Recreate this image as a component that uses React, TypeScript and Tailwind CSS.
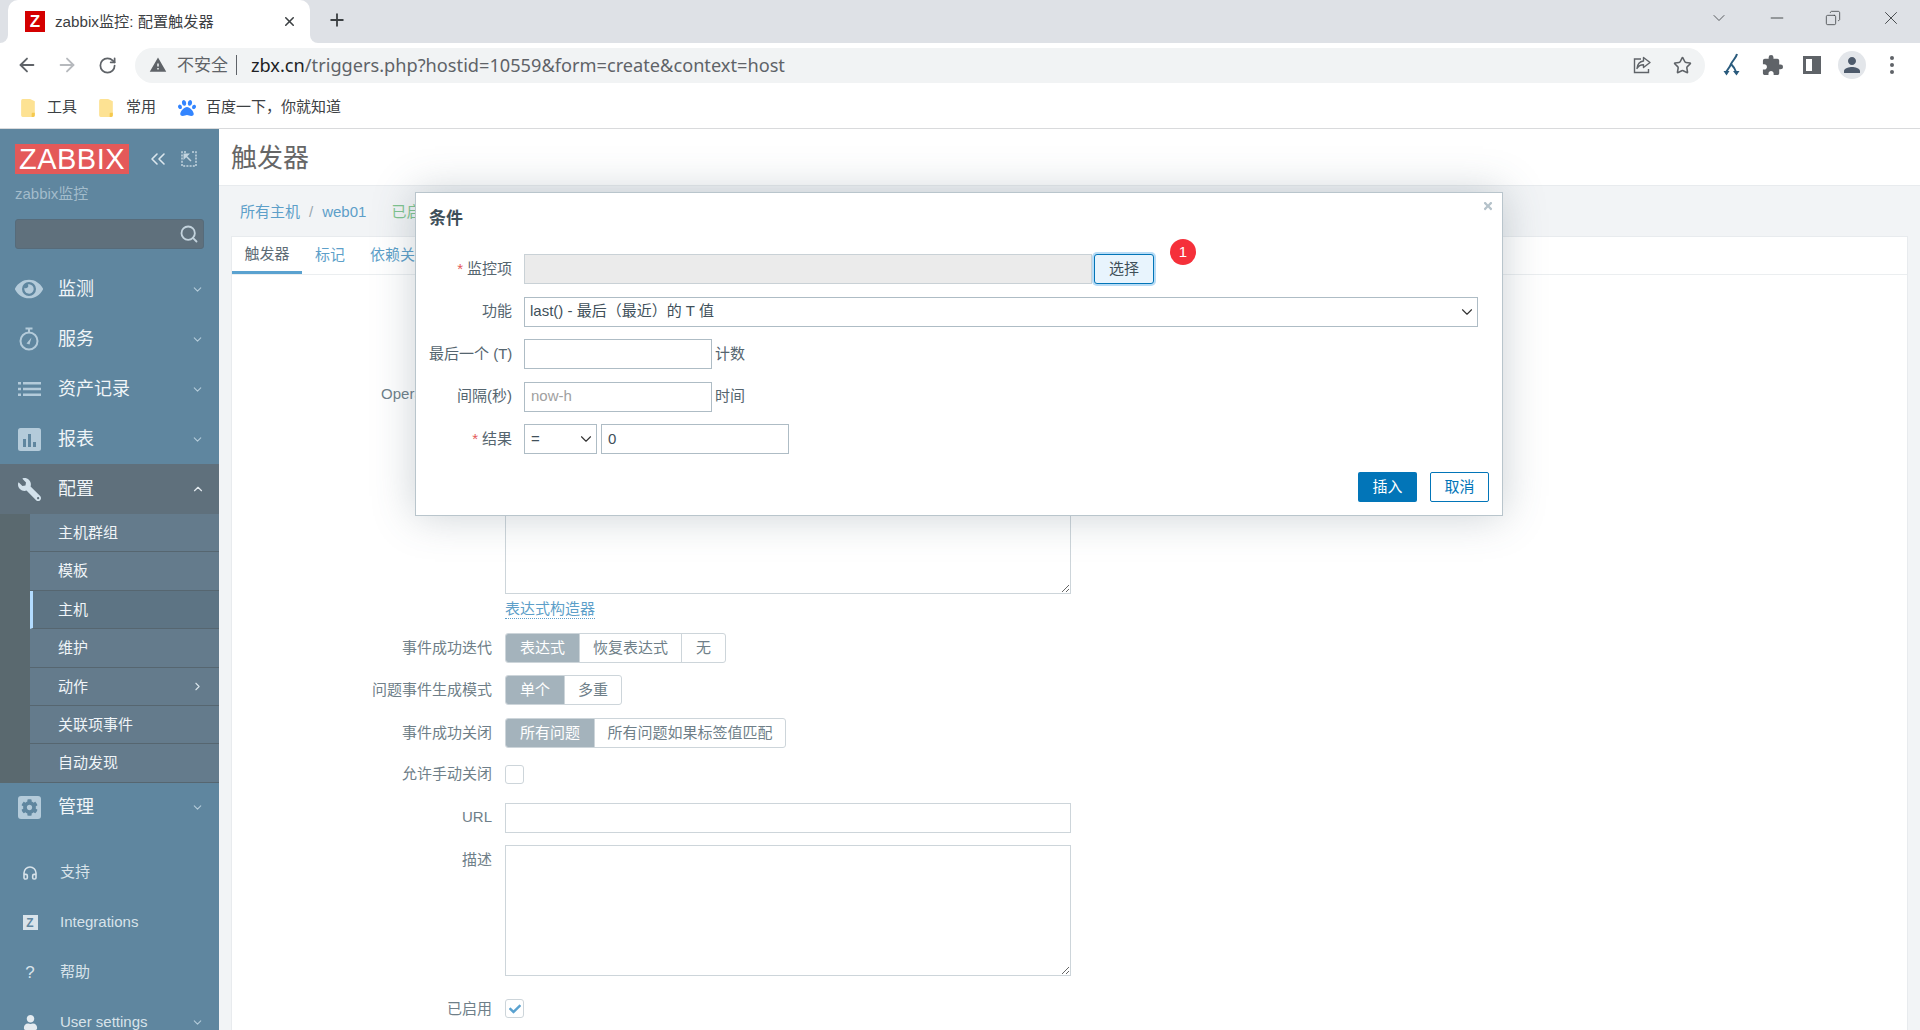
import {
  ArrowLeft,
  ArrowRight,
  ChevronDown,
  ChevronRight,
  ChevronUp,
  ChevronsLeft,
  Copy,
  Headphones,
  Minus,
  Plus,
  RotateCw,
  Search,
  Star,
  X,
} from "lucide-react";
import type { ReactNode } from "react";
import { FaCheck, FaCog, FaEye, FaPaw, FaTimes, FaUser, FaWrench } from "react-icons/fa";
import { MdExtension, MdPerson, MdWarning } from "react-icons/md";

const subItems = ["主机群组", "模板", "主机", "维护", "动作", "关联项事件", "自动发现"];

function FolderIcon() {
  return (
    <svg width="17" height="20" viewBox="0 0 16 19" aria-hidden="true">
      <path d="M1 2.5A1.5 1.5 0 0 1 2.5 1h7L14 3v13.5a1.5 1.5 0 0 1-1.5 1.5h-10A1.5 1.5 0 0 1 1 16.5z" fill="#fde293" />
      <path d="M14 14v2.5a1.5 1.5 0 0 1-1.5 1.5H11v-3a1 1 0 0 1 1-1z" fill="#f5c94f" />
    </svg>
  );
}

function ShareIcon() {
  return (
    <svg width="20" height="20" viewBox="0 0 20 20" fill="none" stroke="#5f6368" strokeWidth="1.4" aria-hidden="true">
      <path d="M9 4H2.5v13.5h14V14" />
      <path d="M11.5 2.5 18 7.5l-6.5 5V9.7c-3 0-5 1-6.5 3.8.4-4 2.5-7 6.5-7.5z" strokeLinejoin="round" />
    </svg>
  );
}

function ForkIcon() {
  return (
    <svg width="18" height="24" viewBox="0 0 18 24" fill="none" stroke="#2a5b7d" strokeWidth="2" aria-hidden="true">
      <path d="M14 1c-1 4-4 6-6 10-1 3-3 5-5 8" />
      <path d="M8 11c2 2 4 4 5 8" />
      <path d="M0.5 18h6l-3 4.5zM10 18h6.5l-3 4.5z" fill="#2a5b7d" stroke="none" />
    </svg>
  );
}

function StopwatchIcon() {
  return (
    <svg width="20" height="24" viewBox="0 0 20 24" fill="none" stroke="#b4cbda" strokeWidth="2" aria-hidden="true">
      <circle cx="10" cy="14" r="8.5" />
      <path d="M6.5 1.5h7M10 2v3" />
      <path d="M7.5 16.5 12.5 10.5l-2 7z" fill="#b4cbda" stroke="none" />
    </svg>
  );
}

function ListIcon() {
  return (
    <svg width="23" height="14" viewBox="0 0 23 14" fill="#b4cbda" aria-hidden="true">
      <path d="M0 0h3v2.5H0zM5 0h18v2.5H5zM0 5.7h3v2.5H0zM5 5.7h18v2.5H5zM0 11.5h3V14H0zM5 11.5h18V14H5z" />
    </svg>
  );
}

function ChartIcon() {
  return (
    <svg width="23" height="23" viewBox="0 0 23 23" aria-hidden="true">
      <rect width="23" height="23" rx="2.5" fill="#b4cbda" />
      <path d="M5 11h3v8H5zM10 6h3v13h-3zM15 14h3v5h-3z" fill="#5f869f" />
    </svg>
  );
}

function GearBoxIcon() {
  return (
    <span className="flex h-[23px] w-[23px] items-center justify-center rounded-[3px] bg-[#b4cbda]">
      <FaCog size={17} color="#5f869f" />
    </span>
  );
}

function ExpandIcon() {
  return (
    <svg width="16" height="16" viewBox="0 0 16 16" fill="none" stroke="#c4d5e0" strokeWidth="1.5" aria-hidden="true">
      <path d="M5 1H1v14h14V1h-4" strokeDasharray="2 1.2" />
      <path d="M2.5 2.5 9 2.5 2.5 9z" fill="#c4d5e0" stroke="none" />
      <path d="M4 4l6 6" />
    </svg>
  );
}

function TabStrip() {
  return (
    <div className="flex h-[43px] items-end bg-[#dee1e6] pl-2">
      <div className="relative flex h-[43px] w-[302px] items-center rounded-t-[10px] bg-white pl-[17px] pr-[13px]">
        <span className="absolute bottom-0 left-[-8px] h-2 w-2 bg-white">
          <span className="block h-2 w-2 rounded-br-[8px] bg-[#dee1e6]" />
        </span>
        <span className="absolute bottom-0 right-[-8px] h-2 w-2 bg-white">
          <span className="block h-2 w-2 rounded-bl-[8px] bg-[#dee1e6]" />
        </span>
        <span className="flex h-[21px] w-[20px] items-center justify-center bg-[#d40000] text-[17px] font-bold leading-none text-white">
          Z
        </span>
        <span className="ml-[10px] flex-1 pt-[1px] text-[15.2px] text-[#3c4043]">zabbix监控: 配置触发器</span>
        <X size={15} strokeWidth={2.5} color="#3c4043" />
      </div>
      <div className="mb-[13px] ml-[17px]">
        <Plus size={20} strokeWidth={2.2} color="#3c4043" />
      </div>
      <div className="ml-auto flex h-full items-center pb-[7px] text-[#3c4043]">
        <ChevronDown size={20} strokeWidth={1} className="mr-[38px]" />
        <Minus size={20} strokeWidth={1.1} className="mr-[38px]" />
        <Copy size={16} strokeWidth={1.2} className="mr-[39px] -scale-x-100" />
        <X size={22} strokeWidth={1} className="mr-[18px]" />
      </div>
    </div>
  );
}

function Toolbar() {
  return (
    <div className="flex h-[44px] items-center bg-white pl-[16px]">
      <ArrowLeft size={22} strokeWidth={2} color="#5f6368" />
      <ArrowRight size={22} strokeWidth={2} color="#b6b9bd" className="ml-[18px]" />
      <RotateCw size={19} strokeWidth={2.2} color="#5f6368" className="ml-[20px]" />
      <div className="ml-[18px] flex h-[35px] w-[1570px] items-center rounded-full bg-[#f1f3f4] pl-[14px] pr-[13px]">
        <MdWarning size={18} color="#5f6368" />
        <span className="ml-[10px] pt-[1px] text-[17px] text-[#5f6368]">不安全</span>
        <span className="ml-2 h-[20px] w-px bg-[#5f6368]" />
        <span className="ml-[14px] pt-[1px] text-[18.2px] text-[#202124] [font-family:'Noto_Sans',sans-serif]">
          zbx.cn<span className="text-[#5f6368]">/triggers.php?hostid=10559&amp;form=create&amp;context=host</span>
        </span>
        <span className="ml-auto">
          <ShareIcon />
        </span>
        <Star size={19} strokeWidth={2} color="#5f6368" className="ml-[21px]" />
      </div>
      <div className="ml-[18px]">
        <ForkIcon />
      </div>
      <MdExtension size={23} color="#5f6368" className="ml-[20px]" />
      <span className="ml-[19px] h-[18px] w-[18px] border-[3px] border-r-[9px] border-[#5f6368] bg-white" />
      <span className="ml-[17px] flex h-7 w-7 items-center justify-center rounded-full bg-[#e3e6ea]">
        <MdPerson size={24} color="#4d5a6b" />
      </span>
      <span className="ml-[24px] flex flex-col gap-[3px]">
        <span className="h-[4px] w-[4px] rounded-full bg-[#5f6368]" />
        <span className="h-[4px] w-[4px] rounded-full bg-[#5f6368]" />
        <span className="h-[4px] w-[4px] rounded-full bg-[#5f6368]" />
      </span>
    </div>
  );
}

function Bookmarks() {
  return (
    <div className="flex h-[42px] items-center border-b border-[#d9dadc] bg-white pl-5 text-[15px] text-[#3c4043]">
      <FolderIcon />
      <span className="ml-[10px]">工具</span>
      <span className="ml-[21px]">
        <FolderIcon />
      </span>
      <span className="ml-[11px]">常用</span>
      <FaPaw size={18} color="#3385ff" className="ml-[22px]" />
      <span className="ml-[10px]">百度一下，你就知道</span>
    </div>
  );
}

function NavItem({ icon, label, open }: { icon: ReactNode; label: string; open?: boolean }) {
  return (
    <div className={`flex h-[50px] items-center text-[18px] text-[#f0f5f8] ${open ? "bg-[#5f707c]" : ""}`}>
      <span className="flex w-[58px] shrink-0 justify-center">{icon}</span>
      <span className="flex-1">{label}</span>
      {open ? (
        <ChevronUp size={14} color="#e4ebf0" className="mr-[14px]" />
      ) : (
        <ChevronDown size={13} color="#b4cbda" className="mr-[15px]" />
      )}
    </div>
  );
}

function FooterItem({ icon, label, more }: { icon: ReactNode; label: string; more?: boolean }) {
  return (
    <div className="flex h-[50px] items-center text-[15px] text-[#d8e3ea]">
      <span className="flex w-[60px] shrink-0 justify-center">{icon}</span>
      <span className="flex-1">{label}</span>
      {more ? <ChevronDown size={13} color="#b4cbda" className="mr-[15px]" /> : null}
    </div>
  );
}

function Sidebar() {
  return (
    <aside className="h-full w-[219px] shrink-0 overflow-hidden bg-[#5f869f]">
      <div className="flex items-center pl-[15px] pt-[15px]">
        <span className="flex h-[30px] w-[114px] items-center justify-center bg-[#e45959] text-[29px] leading-none tracking-[0.5px] text-white">
          ZABBIX
        </span>
        <ChevronsLeft size={24} strokeWidth={1.6} color="#dbe6ed" className="ml-[17px]" />
        <span className="ml-[11px]">
          <ExpandIcon />
        </span>
      </div>
      <div className="ml-[15px] mt-[10px] text-[15px] leading-[20px] text-[#a3bccb]">zabbix监控</div>
      <div className="ml-[15px] mt-[15px] flex h-[30px] w-[189px] items-center justify-end rounded-[3px] border border-[#566b7a] bg-[#5f707c] pr-[4px]">
        <Search size={20} strokeWidth={2.2} color="#c3d3dd" />
      </div>
      <nav className="mt-[15px]">
        <NavItem icon={<FaEye size={28} color="#b4cbda" />} label="监测" />
        <NavItem icon={<StopwatchIcon />} label="服务" />
        <NavItem icon={<ListIcon />} label="资产记录" />
        <NavItem icon={<ChartIcon />} label="报表" />
        <NavItem icon={<FaWrench size={23} color="#d3e2ec" className="-scale-x-100" />} label="配置" open />
        <div className="flex bg-[#5a696f] pl-[30px]">
          <div className="flex-1">
            {subItems.map((item) => (
              <div
                key={item}
                className={`flex h-[38.4px] items-center border-b border-[#566670] pt-[1px] text-[15px] text-[#f0f5f8] ${
                  item === "主机" ? "border-l-[3px] border-l-[#b3dcff] bg-[#5d7484] pl-[25px]" : "bg-[#647b8c] pl-[28px]"
                }`}
              >
                <span className="flex-1">{item}</span>
                {item === "动作" ? <ChevronRight size={13} color="#d8e3ea" className="mr-[15px]" /> : null}
              </div>
            ))}
          </div>
        </div>
        <NavItem icon={<GearBoxIcon />} label="管理" />
      </nav>
      <div className="mt-[15px]">
        <FooterItem icon={<Headphones size={16} strokeWidth={2.4} color="#d8e3ea" />} label="支持" />
        <FooterItem
          icon={
            <span className="flex h-[15px] w-[15px] items-center justify-center bg-[#d8e3ea] text-[12px] font-bold leading-none text-[#5f869f]">
              Z
            </span>
          }
          label="Integrations"
        />
        <FooterItem icon={<span className="text-[17px] text-[#d8e3ea]">?</span>} label="帮助" />
        <FooterItem icon={<FaUser size={15} color="#e4ebf0" />} label="User settings" more />
      </div>
    </aside>
  );
}

function FormRow({ label, className, children }: { label?: string; className?: string; children: ReactNode }) {
  return (
    <div className={`flex items-center ${className ?? ""}`}>
      <div className="w-[260px] shrink-0 text-right text-[15px] text-[#6f7f89]">{label}</div>
      <div className="ml-[13px]">{children}</div>
    </div>
  );
}

function Segments({ items }: { items: { label: string; width: number }[] }) {
  return (
    <div className="flex h-[30px] overflow-hidden rounded-[3px] border border-[#cdd5da] text-[15px]">
      {items.map((item, i) => (
        <span
          key={item.label}
          style={{ width: item.width }}
          className={`flex items-center justify-center ${
            i === 0 ? "bg-[#a4b3bc] text-white" : "border-l border-[#cdd5da] text-[#6f7f89] first:border-l-0"
          }`}
        >
          {item.label}
        </span>
      ))}
    </div>
  );
}

function TriggerForm() {
  return (
    <div className="mx-[12px] h-full flex-1 border border-b-0 border-[#e8ebee] bg-white">
      <div className="flex h-[38px] items-stretch border-b border-[#ebeef0] text-[15px] text-[#5d9fc9]">
        <span className="flex w-[70px] items-center justify-center border-b-[3px] border-[#5aa2d0] text-[#5d6c75]">
          触发器
        </span>
        <span className="ml-[13px] flex items-center">标记</span>
        <span className="ml-[25px] flex items-center">依赖关系</span>
      </div>
      <div className="pt-[104px]">
        <FormRow label="Operational data">
          <div className="h-[30px] w-[566px] border border-[#cdd5da]" />
        </FormRow>
        <FormRow className="mt-3 !items-start">
          <textarea readOnly className="block h-[173px] w-[566px] border border-[#cdd5da] bg-white" />
        </FormRow>
        <div className="ml-[273px] mt-[5px] w-max border-b border-dotted border-[#5d9fc9] text-[15px] leading-[19px] text-[#5d9fc9]">
          表达式构造器
        </div>
        <FormRow label="事件成功迭代" className="mt-[14px]">
          <Segments
            items={[
              { label: "表达式", width: 73 },
              { label: "恢复表达式", width: 102 },
              { label: "无", width: 44 },
            ]}
          />
        </FormRow>
        <FormRow label="问题事件生成模式" className="mt-[12px]">
          <Segments
            items={[
              { label: "单个", width: 58 },
              { label: "多重", width: 57 },
            ]}
          />
        </FormRow>
        <FormRow label="事件成功关闭" className="mt-[13px]">
          <Segments
            items={[
              { label: "所有问题", width: 88 },
              { label: "所有问题如果标签值匹配", width: 191 },
            ]}
          />
        </FormRow>
        <FormRow label="允许手动关闭" className="mt-[15px]">
          <span className="block h-[19px] w-[19px] rounded-[3px] border border-[#cdd5da]" />
        </FormRow>
        <FormRow label="URL" className="mt-[17px]">
          <div className="h-[30px] w-[566px] border border-[#cdd5da]" />
        </FormRow>
        <FormRow label="描述" className="mt-[12px] !items-start [&>div:first-child]:pt-[4px]">
          <textarea readOnly className="block h-[131px] w-[566px] border border-[#cdd5da] bg-white" />
        </FormRow>
        <FormRow label="已启用" className="mt-[22px]">
          <span className="flex h-[19px] w-[19px] items-center justify-center rounded-[3px] border border-[#cdd5da]">
            <FaCheck size={12} color="#5aa2d0" />
          </span>
        </FormRow>
      </div>
    </div>
  );
}

function ModalRow({ label, required, children }: { label: string; required?: boolean; children: ReactNode }) {
  return (
    <div className="flex h-[30px] items-center">
      <div className="w-[83px] shrink-0 whitespace-nowrap text-right text-[15px] text-[#55656f]">
        {required ? <span className="mr-1 text-[#e45959]">*</span> : null}
        {label}
      </div>
      <div className="ml-3 flex items-center">{children}</div>
    </div>
  );
}

function ConditionModal() {
  return (
    <div className="absolute left-[415px] top-[192px] h-[324px] w-[1088px] border border-[#b9c5cc] bg-white pl-[13px] pr-[13px] text-[15px] shadow-[0_0_40px_rgba(70,90,105,0.28)]">
      <FaTimes size={12} color="#b5c2ca" className="absolute right-[8px] top-[7px]" />
      <div className="pt-[13px] text-[17px] font-bold leading-[26px] text-[#3e4f59]">条件</div>
      <div className="mt-[22px] flex flex-col gap-[12.5px]">
        <ModalRow label="监控项" required>
          <div className="h-[30px] w-[568px] border border-[#c9d1d6] bg-[#ebebeb]" />
          <button
            type="button"
            className="ml-[2px] h-[30px] w-[60px] rounded-[3px] border border-[#0275b8] bg-[#e8f4fd] text-[15px] text-[#3f4f58] shadow-[0_0_0_2px_#b8dcf6]"
          >
            选择
          </button>
        </ModalRow>
        <ModalRow label="功能">
          <div className="flex h-[30px] w-[954px] items-center border border-[#aebcc5] pl-[5px] pr-[1px] text-[#40505a]">
            <span className="flex-1">last() - 最后（最近）的 T 值</span>
            <ChevronDown size={18} strokeWidth={1.5} color="#333" />
          </div>
        </ModalRow>
        <ModalRow label="最后一个 (T)">
          <div className="h-[30px] w-[188px] border border-[#aebcc5]" />
          <span className="ml-[3px] text-[#55656f]">计数</span>
        </ModalRow>
        <ModalRow label="间隔(秒)">
          <div className="flex h-[30px] w-[188px] items-center border border-[#aebcc5] pl-[6px] text-[#a0a0a0]">now-h</div>
          <span className="ml-[3px] text-[#55656f]">时间</span>
        </ModalRow>
        <ModalRow label="结果" required>
          <div className="flex h-[30px] w-[73px] items-center border border-[#aebcc5] pl-[6px] pr-[1px] text-[#40505a]">
            <span className="flex-1">=</span>
            <ChevronDown size={18} strokeWidth={1.5} color="#333" />
          </div>
          <div className="ml-1 flex h-[30px] w-[188px] items-center border border-[#aebcc5] pl-[6px] text-[#40505a]">0</div>
        </ModalRow>
      </div>
      <div className="mt-[18px] flex justify-end gap-[13px]">
        <button type="button" className="h-[30px] w-[59px] rounded-[2px] bg-[#0275b8] text-[15px] text-white">
          插入
        </button>
        <button type="button" className="h-[30px] w-[59px] rounded-[2px] border border-[#0275b8] text-[15px] text-[#0275b8]">
          取消
        </button>
      </div>
    </div>
  );
}

export default function App() {
  return (
    <div className="relative flex h-[1030px] w-[1920px] flex-col overflow-hidden bg-white [font-family:'Liberation_Sans','Noto_Sans_CJK_SC',sans-serif]">
      <TabStrip />
      <Toolbar />
      <Bookmarks />
      <main className="flex min-h-0 flex-1">
        <Sidebar />
        <div className="flex min-w-0 flex-1 flex-col bg-[#f2f4f6]">
          <header className="flex h-[57px] shrink-0 items-center border-b border-[#e8ebee] bg-white pl-[12px] pt-[2px] text-[26px] text-[#666]">
            触发器
          </header>
          <div className="flex h-[50px] shrink-0 items-center pl-[21px] pt-[2px] text-[15px] text-[#5d9fc9]">
            <span>所有主机</span>
            <span className="mx-[9px] text-[#9aa7af]">/</span>
            <span>web01</span>
            <span className="ml-[25px] text-[#7fc48f]">已启用</span>
          </div>
          <div className="flex min-h-0 flex-1">
            <TriggerForm />
          </div>
        </div>
      </main>
      <ConditionModal />
      <span className="absolute left-[1170px] top-[239px] flex h-[26px] w-[26px] items-center justify-center rounded-full bg-[#f5303a] text-[15px] text-white">
        1
      </span>
    </div>
  );
}
